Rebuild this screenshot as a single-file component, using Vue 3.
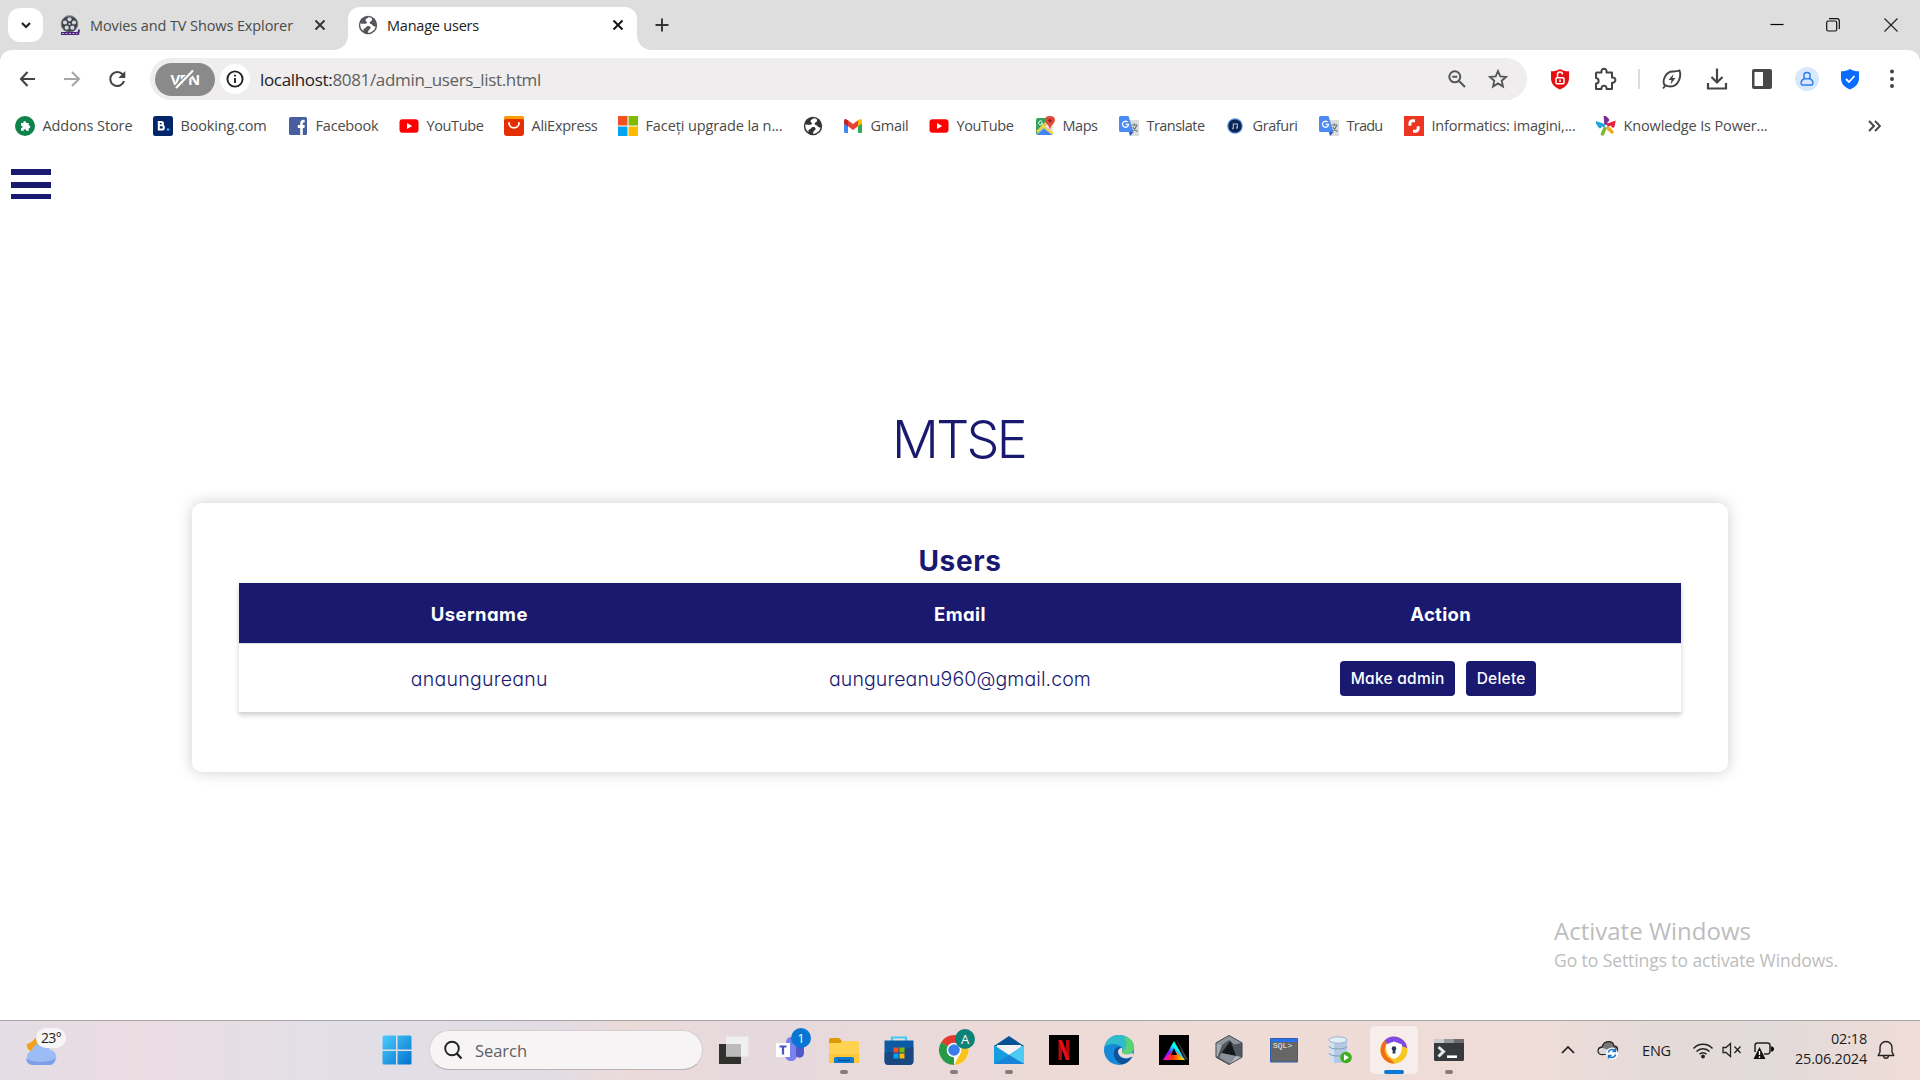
<script setup>
// Spreads or tightens the tracking so a label fills the given width in pixels.
const vFit = {
  mounted(el, { value }) {
    if (!value) return
    const range = document.createRange()
    range.selectNodeContents(el)
    const natural = range.getBoundingClientRect().width
    el.style.letterSpacing = (value - natural) / el.textContent.length + 'px'
  },
}

const globe = (c) => `<circle cx="10" cy="10" r="9.2" fill="${c}"/><path d="M10.5 2.2c-1 .9-2.8 1.500-3 3 0 1.300 1.600 1.100 1.500 2.400-.2 1.500-2.600 1.200-3.800 1.200L2.300 8.600c-.4 3 .7 5.600 3 7.400.2-1.500.3-2.400 1.600-2.700 1.400-.3 1.200-2 2.700-2.200 1.600-.2 3.200.4 3 2-.2 1.500-2.200 1.600-2.400 3.100v1.700c4-.4 6.600-3 7.400-6.400-1.500 0-2.500-.4-3.200-1.500-.8-1.200-2.600-.6-2.800-2.200-.1-1.500 1.800-1.500 2.300-2.600.4-.9 0-1.800-.3-2.300-.9-.5-1.900-.8-3.100-.7z" fill="#fff"/>`
const youtube = '<rect x="0.5" y="3.300" width="19" height="13.400" rx="3" fill="#f00"/><path d="M8 7v6l5.200-3z" fill="#fff"/>'
const translate = '<path d="M8 4h12v15a1 1 0 0 1-1 1H11z" fill="#dcdcdc"/><path d="M1.500 0h8L14.500 16H1.500A1.500 1.500 0 0 1 0 14.500v-13A1.500 1.500 0 0 1 1.500 0z" fill="#4b8bf5"/><path d="M10 16h4.500l-3.500 4z" fill="#2a53b8"/><path d="M8.600 6.100a3 3 0 1 0 .9 2.300H6.700" fill="none" stroke="#fff" stroke-width="1.300"/><path d="M12.500 9h6M15.300 7.500V9M17.600 9c-.5 3-2.500 5-4.100 6M14 11c.8 2 2.700 3.700 4.400 4.600" fill="none" stroke="#607078" stroke-width="1.100"/>'

const bookmarks = [
  { label: 'Addons Store', text: 90, width: 138, icon: '<circle cx="10" cy="10" r="10" fill="#0d824b"/><path d="M6 7h2.300c-.7-2.200 3.400-2.200 2.800 0h2.600v2.500c2.100-.6 2.100 3.100 0 2.600V14.700h-2.600c.5-1.900-2.800-1.900-2.400 0H6V12c1.900.4 1.900-2.600 0-2.300z" fill="#fff"/>' },
  { label: 'Booking.com', text: 86, width: 135, icon: '<rect width="20" height="20" rx="2.500" fill="#03266b"/><path d="M5.800 5v9.500M5.800 5.900h2.500c2.300 0 2.300 3.300 0 3.300H5.800h3c2.700 0 2.700 4.400 0 4.400h-3" fill="none" stroke="#fff" stroke-width="2"/><circle cx="15" cy="13.600" r="1.400" fill="#2aa8ff"/>' },
  { label: 'Facebook', text: 63, width: 111, icon: '<rect x="1" y="1" width="18" height="18" rx="1.500" fill="#475f9f"/><path d="M12.200 19v-7H9.800V9h2.400V7.200c0-2.400 1.400-3.700 4.500-3.300v2.500c-1.500-.1-1.900.2-1.900 1.200V9h2l-.4 3h-1.600v7z" fill="#fff"/>' },
  { label: 'YouTube', text: 57, width: 105, icon: youtube },
  { label: 'AliExpress', text: 66, width: 114, icon: '<rect width="20" height="20" rx="3" fill="#e62e04"/><path d="M0 4V3a3 3 0 0 1 3-3h14a3 3 0 0 1 3 3v1l-2-1H2z" fill="#ff9d00"/><path d="M5 7c0 6.500 10 6.500 10 0" fill="none" stroke="#fff" stroke-width="1.800" stroke-linecap="round"/>' },
  { label: 'Faceți upgrade la n...', text: 137, width: 185, icon: '<path fill="#f25022" d="M0 0h9.500v9.500H0z"/><path fill="#7fba00" d="M10.500 0H20v9.500h-9.500z"/><path fill="#00a4ef" d="M0 10.500h9.500V20H0z"/><path fill="#ffb900" d="M10.500 10.500H20V20h-9.500z"/>' },
  { label: '', text: 0, width: 40, icon: globe('#333') },
  { label: 'Gmail', text: 38, width: 86, icon: '<path d="M1 5v11a1 1 0 0 0 1 1h3V7z" fill="#4285f4"/><path d="M19 5v11a1 1 0 0 1-1 1h-3V7z" fill="#34a853"/><path d="M15 4.300 16.500 3.400C17.800 2.600 19 3.500 19 5v2.500l-4 3z" fill="#fbbc04"/><path d="M5 4.300 3.500 3.400C2.200 2.600 1 3.500 1 5v2.500l4 3z" fill="#c5221f"/><path d="M5 4.300v6l5 3.700 5-3.700v-6L10 8z" fill="#ea4335"/>' },
  { label: 'YouTube', text: 57, width: 106, icon: youtube },
  { label: 'Maps', text: 35, width: 84, icon: '<rect x="1" y="2" width="17" height="17" rx="2" fill="#34a35a"/><path d="m1 19 16-16 1 1v13l-6-5z" fill="#e8e8e8"/><path d="m2 19 8-8 7 8z" fill="#4285f4"/><path d="M2 16 13 5M8 10l10 8" stroke="#f9d24a" stroke-width="2.400"/><path d="M15 0c6 0 6 5 3 8-1.500 2-2.500 3-3 6-.5-3-1.500-4-3-6-3-3-3-8 3-8z" fill="#e1493b"/><circle cx="15" cy="4.600" r="1.700" fill="#84281f"/><path d="M7 5.500a2 2 0 1 0 .6 1.700H6" fill="none" stroke="#fff"/>' },
  { label: 'Translate', text: 58, width: 106, icon: translate },
  { label: 'Grafuri', text: 45, width: 94, icon: '<circle cx="10" cy="10" r="7.800" fill="#5b93dc"/><circle cx="10" cy="10" r="6.600" fill="#0d2350"/><path d="M8.300 12.500V8h4v4" fill="none" stroke="#b3c3dc" stroke-width="1.100"/><path d="M7.200 12.500h1.300m2.700-.5h1.300" stroke="#b3c3dc" stroke-width="1.600"/>' },
  { label: 'Tradu', text: 36, width: 85, icon: translate },
  { label: 'Informatics: imagini,...', text: 144, width: 192, icon: '<rect width="20" height="20" fill="#ee3524"/><path d="M11 4.800H8.500a2.600 2.600 0 0 0-2.600 2.600v2.400M9 15.200h2.600a2.600 2.600 0 0 0 2.600-2.600v-2.400" fill="none" stroke="#fff" stroke-width="3"/>' },
  { label: 'Knowledge Is Power...', text: 144, width: 180, icon: '<g stroke-width="3.400" stroke-linecap="round" fill="none"><path d="M10 8 9.500 2l2 2" stroke="#7b2d90"/><path d="m12 9 5.500-2-.5 3" stroke="#e4223c"/><path d="m12 12 4 4" stroke="#f5a81c"/><path d="M9 12 6.500 18" stroke="#7cb82f"/><path d="M8 9.500 2 7.500l2 3" stroke="#25a4dc"/></g><circle cx="10" cy="10" r="1.300" fill="#fff"/>' },
]

const apps = [
  { name: 'task-view', icon: '<path d="M4 13h22v20H4z" fill="#30302f"/><path d="M11 5.500h22.500v20H11z" fill="#f3f2f2" fill-opacity=".88"/><path d="M11 13h15v12.500H11z" fill="#bcbaba"/>' },
  { name: 'teams', icon: '<circle cx="21" cy="11" r="5" fill="#7b83eb"/><path d="M15 15h12v9c0 8-12 8-12 0z" fill="#7b83eb"/><path d="M26 14h8v8c0 5-6 6-8 3z" fill="#5059c9"/><path d="M6 12h14v14H6z" fill="#fff"/><path d="M9.500 15.500h7M13 15.500v8" stroke="#4b53bc" stroke-width="2.200"/>', badge: '1', tone: 'blue' },
  { name: 'explorer', running: true, icon: '<path d="M4 9a2 2 0 0 1 2-2h8l3 3-2 4H4z" fill="#dd9900"/><path d="M4 12h11l3-2h14a2 2 0 0 1 2 2v20H4z" fill="#ffd251"/><path d="M4 23h30v9H4z" fill="#ffc83b"/><path d="M9 32v-4a2 2 0 0 1 2-2h16a2 2 0 0 1 2 2v4z" fill="#0f7bd0"/><path d="M13 29.500h12" stroke="#0a539c" stroke-width="1.300"/>' },
  { name: 'store', icon: '<path d="M12 11V6.500h14V11" fill="none" stroke="#3dcdf9" stroke-width="2.200"/><path d="M4.500 9.500h29V30a4 4 0 0 1-4 4h-21a4 4 0 0 1-4-4z" fill="#0d5aa4"/><path d="M4.500 22 33.500 16v14a4 4 0 0 1-4 4h-21a4 4 0 0 1-4-4z" fill="#203d6c" opacity=".65"/><path fill="#f25022" d="M13.500 16.500h5v5h-5z"/><path fill="#7fba00" d="M19.500 16.500h5v5h-5z"/><path fill="#00a4ef" d="M13.500 22.500h5v5h-5z"/><path fill="#ffb900" d="M19.500 22.500h5v5h-5z"/>' },
  { name: 'chrome', running: true, icon: '<circle cx="19" cy="19" r="15" fill="#fff"/><path d="M19 19 6 11.500a15 15 0 0 1 26 0z" fill="#e33b2e"/><path d="M19 19 6 11.500A15 15 0 0 0 19 34z" fill="#269a48"/><path d="M12.500 22.500 6 11.500l13 7.500-2 12z" fill="#269a48"/><path d="M19 12h13a15 15 0 0 1-13 22l6.500-12z" fill="#fcc31e"/><circle cx="19" cy="19" r="7.300" fill="#fff"/><circle cx="19" cy="19" r="5.800" fill="#3b7ded"/>', badge: 'A', tone: 'green' },
  { name: 'mail', running: true, icon: '<path d="m4 15 15-10 15 10z" fill="#075197"/><path d="M7 14h24v12H7z" fill="#f4f3f5"/><path d="m4 14 15 10 15-10v19H4z" fill="#169de0"/><path d="m19 24 15-9.500V33z" fill="#4dcbf2"/><path d="m4 33 15-9 15 9z" fill="#1685d8"/>' },
  { name: 'netflix', icon: '<path d="M4 4h30v30H4z"/><path d="M13.500 9h3.500v20h-3.500zM21 9h3.500v20H21z" fill="#b00710"/><path d="M13.500 9H17l7.500 20H21z" fill="#ed0b16"/>' },
  { name: 'edge', icon: '<circle cx="19" cy="19" r="15" fill="#1689d8"/><path d="M4.500 16C6 8 12 4 19 4c9 0 15 6 15 12 0 5-4 7.500-8 7.500-3 0-4.500-1.500-4-3 .5-1 1-2 .5-3.500-3-5-13-5.500-18-1z" fill="#31bccb"/><path d="M24 5c6 2 10 6.500 10 11 0 5-4 7.500-8 7.500-3 0-4.500-1.500-4-3 5-3 6-9 2-15.500z" fill="#65d85b" opacity=".8"/><path d="M15 18c-3 5 0 13 7 15.500 4-1 8-3.500 10-7.500-8 4-14 0-14-5 0-2 1-4 3-4.500-2-1-5-.5-6 1.500z" fill="#0f5299"/><path d="M22 17c1 2-.5 3 0 4.500 1 2 5 2.500 10.500.5L34 26l-2-.5c-7 4-13 .5-14-4.500 0-2 1.500-4 4-4z" fill="#eedbd8"/>' },
  { name: 'spectrum', icon: '<defs><linearGradient id="sp1" x1="0" y1="1" x2="1" y2="0"><stop offset="0" stop-color="#f0f"/><stop offset=".35" stop-color="#62f"/><stop offset=".6" stop-color="#0ff"/><stop offset="1" stop-color="#0f6"/></linearGradient><linearGradient id="sp2"><stop offset="0" stop-color="#f0f"/><stop offset=".45" stop-color="#f30"/><stop offset="1" stop-color="#ff0"/></linearGradient></defs><path d="M4 4h30v30H4z"/><path d="M21 7 33 29l-3-1z" fill="#464646"/><path d="m19 10 11 19H8z" fill="url(#sp1)"/><path d="m19 19 11 10H8z" fill="url(#sp2)"/><path d="m19 17 3 7h-6z"/>' },
  { name: 'hexagon', icon: '<path d="m19 4.500 13 7.300v14.400l-13 7.300-13-7.300V11.800z" fill="#50565d" stroke="#3f454b"/><path d="m19 5 12.500 7-7 1.500L19 9l-7 5-5.500-2z" fill="#8d949b"/><path d="m6.500 12 5.500 2-4 11-1.500 1z" fill="#a4aab0"/><path d="m20.500 10 5.500 15-14.500-3z" fill="#14181d"/><path d="m11.500 22 14.500 3-7 7.500-10-6z" fill="#8a9199"/><path d="m26 25 5.500 1-12.500 7z" fill="#b3b8bd"/>' },
  { name: 'sqlplus', icon: '<path d="M5.500 7.500h27v23.500h-27z" fill="#666" stroke="#2c5fae"/><path d="M6 8h26v3H6z" fill="#2872ec"/>', caption: 'SQL>' },
  { name: 'database', icon: '<path d="M9 9v20c0 4 18 4 18 0V9z" fill="#b3cae2"/><path d="M9 9v20c0 1.500 2 2.500 5 2.800V9z" fill="#d3e2f0"/><path d="M9 15c0 4 18 4 18 0M9 22c0 4 18 4 18 0" fill="none" stroke="#7f9dbe"/><ellipse cx="18" cy="9" rx="9" ry="3.200" fill="#e3edf6" stroke="#8aa6c4" stroke-width=".8"/><circle cx="26" cy="26.500" r="5.800" fill="#3fae1c"/><path d="M24 23.300v6.400l5-3.200z" fill="#fff"/>' },
  { name: 'secure-browser', active: true, icon: '<circle cx="19" cy="19" r="10.500" fill="none" stroke="#f7c822" stroke-width="6"/><path d="M20 32.500A13.500 13.500 0 0 1 9.500 9.500L12 12.500A10 10 0 0 0 14 27z" fill="#f36b17"/><path d="M9.500 9.500A13.500 13.500 0 0 1 32.300 17L26 15c-4-4-8-5-13-1.500z" fill="#7c4be8"/><path d="m19 10.500 8 3c0 7-2 12-8 14.500-6-2.500-8-7.500-8-14.500z" fill="#fff"/><circle cx="19" cy="17.500" r="2.300" fill="#27355b"/><path d="M18 18h2l.5 4.500h-3z" fill="#27355b"/>' },
  { name: 'terminal', running: true, icon: '<rect x="4" y="8" width="30" height="22" rx="1.500" fill="#373a3c"/><path d="M5 8h9v4H4V9a1 1 0 0 1 1-1z" fill="#ccc"/><path d="M14 8h10v4H14z" fill="#969696"/><path d="M24 8h9a1 1 0 0 1 1 1v3H24z" fill="#6b6b6b"/><path d="m8.500 16 5 4.500-5 5" fill="none" stroke="#e8e8e8" stroke-width="3"/><path d="M17 25.700h10" stroke="#fff" stroke-width="2.600"/>' },
]
</script>

<template>
  <div class="screen">
    <header class="tabs">
      <div class="tab-search"><svg width="12" height="12" viewBox="0 0 12 12"><path d="m2 4 4 4 4-4" fill="none" stroke="#222" stroke-width="2.200" /></svg></div>
      <div class="tab idle">
        <svg class="favicon" width="20" height="20" viewBox="0 0 20 20"><circle cx="9.500" cy="9" r="8" fill="#40434c" /><g fill="#d4d7de"><circle cx="9.500" cy="4.300" r="2.100" /><circle cx="14" cy="7.500" r="2.100" /><circle cx="12.300" cy="12.700" r="2.100" /><circle cx="6.700" cy="12.700" r="2.100" /><circle cx="5" cy="7.500" r="2.100" /><circle cx="9.500" cy="9" r="1" /></g><circle cx="9.500" cy="9" r="8.300" fill="none" stroke="#747985" /><path d="M1 17h16.500l1-3 1.500 1-1 5H1z" fill="#4b2577" /><path d="M2 18.500h15.500" stroke="#bda4dc" stroke-dasharray="2 1.500" /></svg>
        <span v-fit="203" class="tab-title">Movies and TV Shows Explorer</span>
        <svg class="x" width="12" height="12" viewBox="0 0 12 12"><path d="m1.500 1.500 9 9m0-9-9 9" stroke="#333" stroke-width="1.900" /></svg>
      </div>
      <div class="tab current">
        <svg class="favicon" width="20" height="20" viewBox="0 0 20 20" v-html="globe('#54575b')" />
        <span v-fit="92" class="tab-title">Manage users</span>
        <svg class="x" width="12" height="12" viewBox="0 0 12 12"><path d="m1.500 1.500 9 9m0-9-9 9" stroke="#111" stroke-width="1.900" /></svg>
      </div>
      <svg class="plus" width="14" height="14" viewBox="0 0 14 14"><path d="M7 .5v13M.5 7h13" stroke="#333" stroke-width="1.900" /></svg>
      <div class="window-controls">
        <svg width="14" height="14" viewBox="0 0 14 14"><path d="M.5 6.500h13" stroke="#000" stroke-width="1.200" /></svg>
        <svg width="14" height="14" viewBox="0 0 14 14"><rect x=".7" y="3" width="10" height="10" rx="1.500" fill="none" stroke="#111" stroke-width="1.200" /><path d="M3 .7h8a2.300 2.300 0 0 1 2.300 2.300v8" fill="none" stroke="#111" stroke-width="1.200" /></svg>
        <svg width="14" height="14" viewBox="0 0 14 14"><path d="m.5.5 13 13m0-13-13 13" stroke="#222" stroke-width="1.200" /></svg>
      </div>
    </header>

    <section class="chrome">
      <div class="toolbar">
        <nav class="nav">
          <svg width="18" height="18" viewBox="0 0 18 18"><path d="M17 9H3.500M9.500 2 3 9l6.500 7" fill="none" stroke="#444" stroke-width="2.100" /></svg>
          <svg width="18" height="18" viewBox="0 0 18 18"><path d="M1 9h14.500M9 2l7 7-7 7" fill="none" stroke="#a7a7a7" stroke-width="2.100" /></svg>
          <svg width="18" height="18" viewBox="0 0 18 18"><path d="M16 11A7 7 0 1 1 14.800 4.700L16.300 6.500" fill="none" stroke="#444" stroke-width="2.100" /><path d="M17.300 1v7h-7z" fill="#444" /></svg>
        </nav>
        <div class="omnibox">
          <div class="vpn"><span v-fit="29">VPN</span><svg width="20" height="20" viewBox="0 0 20 20"><path d="M1 18.500 18 3" stroke="#8a8a8a" stroke-width="5" /><path d="M1 19 18 1.500" stroke="#fff" stroke-width="2.200" /></svg></div>
          <div class="info"><svg width="18" height="18" viewBox="0 0 18 18"><circle cx="9" cy="9" r="7.600" fill="none" stroke="#222" stroke-width="1.900" /><path d="M9 8v5M9 4.700v1.900" stroke="#222" stroke-width="1.900" /></svg></div>
          <div v-fit="281" class="url"><b>localhost:</b>8081/admin_users_list.html</div>
          <svg class="magnifier" width="18" height="18" viewBox="0 0 18 18"><circle cx="6.800" cy="6.800" r="5.500" fill="none" stroke="#555" stroke-width="2" /><path d="m11 11 6 6M4.300 6.800h5" stroke="#555" stroke-width="2" /></svg>
          <svg class="star" width="20" height="20" viewBox="0 0 20 20"><path d="m10 2 2.300 5.400 5.800.5-4.400 3.800 1.300 5.800-5-3.100-5 3.100 1.300-5.800L1.900 7.900l5.800-.5z" fill="none" stroke="#555" stroke-width="1.800" /></svg>
        </div>
        <div class="extensions">
          <svg width="24" height="24" viewBox="0 0 24 24"><path d="M12 2c2.500 1.700 5.500 2.300 9 2.300V11c0 5.500-3.300 9-9 11.500C6.300 20 3 16.500 3 11V4.300C6.500 4.300 9.500 3.700 12 2z" fill="#e60d10" /><rect x="8" y="10.800" width="8" height="6" rx="1" fill="none" stroke="#fff" stroke-width="1.500" /><path d="M9.500 10.500v-3a2.500 2.500 0 0 1 5 0M12 12.500v2.500" fill="none" stroke="#fff" stroke-width="1.500" /></svg>
          <svg width="24" height="24" viewBox="0 0 24 24"><path d="M4 5.500h4.500c-1-5 6-5 5 0H19v5c4.500-.8 4.500 6 0 5.200V22h-5.500c.5-4.500-5.500-4.500-5 0H3v-5.500c3.500 0 3.500-5 0-5.500V6.500a1 1 0 0 1 1-1z" fill="none" stroke="#444" stroke-width="2" stroke-linejoin="round" /></svg>
          <i class="divider" />
          <svg width="24" height="24" viewBox="0 0 24 24"><path d="M3 21.500 5 19c-3.500-5 .500-14.500 8-14.500 3 0 5-.8 6.500-1 2 5-.5 16-9 16-2.500 0-4-.5-5.500-1.500" fill="none" stroke="#444" stroke-width="1.900" /><path d="m13.500 7-5 6h3l-1 4.500 5-6.500h-3z" fill="#444" /></svg>
          <svg width="24" height="24" viewBox="0 0 24 24"><path d="M12 1.500V15M6.500 10l5.500 5.500 5.500-5.500M3 16v5.500h18V16" fill="none" stroke="#444" stroke-width="2.200" /></svg>
          <svg width="24" height="24" viewBox="0 0 24 24"><rect x="2" y="2" width="20" height="20" rx="2" fill="#484848" /><path d="M4.500 5H13v14H4.500z" fill="#fff" /></svg>
          <svg width="24" height="24" viewBox="0 0 24 24"><circle cx="12" cy="12" r="12" fill="#d9e8fd" /><circle cx="12" cy="8.700" r="3.200" fill="none" stroke="#2680f0" stroke-width="1.400" /><path d="M9.800 11.500C5 13 5.500 18 7.500 18h9c2 0 2.500-5-2.300-6.500" fill="none" stroke="#2680f0" stroke-width="1.400" /></svg>
          <svg class="safe" width="24" height="24" viewBox="0 0 24 24"><path d="M12 2c2.500 1.700 5.500 2.300 9 2.300V11c0 5.500-3.300 9-9 11.500C6.300 20 3 16.500 3 11V4.300C6.500 4.300 9.500 3.700 12 2z" fill="#0a6cff" /><path d="m8 12 3 3 5.500-6" fill="none" stroke="#fff" stroke-width="1.800" /></svg>
          <svg class="dots" width="24" height="24" viewBox="0 0 24 24"><g fill="#444"><circle cx="12" cy="4.500" r="2" /><circle cx="12" cy="12" r="2" /><circle cx="12" cy="19" r="2" /></g></svg>
        </div>
      </div>
      <div class="bookmarks">
        <div v-for="(b, i) in bookmarks" :key="i" class="bookmark" :style="{ width: b.width + 'px' }">
          <svg width="20" height="20" viewBox="0 0 20 20" v-html="b.icon" />
          <span v-if="b.label" v-fit="b.text">{{ b.label }}</span>
        </div>
        <svg class="more" width="13" height="12" viewBox="0 0 13 12"><path d="m1 1 5 5-5 5m6-10 5 5-5 5" fill="none" stroke="#444" stroke-width="1.900" /></svg>
      </div>
    </section>

    <main class="page">
      <div class="burger"><i /><i /><i /></div>
      <h1><span v-fit="133">MTSE</span></h1>
      <section class="card">
        <h2><span v-fit="83">Users</span></h2>
        <table>
          <thead>
            <tr><th><span v-fit="97">Username</span></th><th><span v-fit="52">Email</span></th><th><span v-fit="61">Action</span></th></tr>
          </thead>
          <tbody>
            <tr>
              <td><span v-fit="137">anaungureanu</span></td>
              <td><span v-fit="262">aungureanu960@gmail.com</span></td>
              <td class="last"><div class="actions"><button class="admin"><span v-fit="94">Make admin</span></button><button class="delete"><span v-fit="49">Delete</span></button></div></td>
            </tr>
          </tbody>
        </table>
      </section>
      <aside class="watermark">
        <div class="wm-title"><span v-fit="197">Activate Windows</span></div>
        <div class="wm-sub"><span v-fit="284">Go to Settings to activate Windows.</span></div>
      </aside>
    </main>

    <footer class="taskbar">
      <div class="weather">
        <svg width="32" height="32" viewBox="0 0 32 32"><path d="M2 8c4-1 7-4 9-7l4 8-7 7C4 15 1 12 2 8z" fill="#f5a11c" /><path d="M8 29a7.500 7.500 0 0 1-1-14.500C10 4 23 5 25 14c9 1 8 15-1 15z" fill="#9cbcf5" /><path d="M1 22c3 5 26 5 29 0 0 4-2 7-6 7H8c-4 0-7-3-7-7z" fill="#7c9fe8" /></svg>
        <div class="temp"><span v-fit="20">23°</span></div>
      </div>
      <svg class="start" width="30" height="30" viewBox="0 0 30 30"><defs><linearGradient id="win" x1="0" y1="0" x2="1" y2="1"><stop offset="0" stop-color="#4ccdfb" /><stop offset="1" stop-color="#0072d0" /></linearGradient></defs><path d="M2 .5h12v14H.5V2A1.500 1.500 0 0 1 2 .5zM15.500.5H28A1.500 1.500 0 0 1 29.500 2v12.500h-14zM.5 16H14v13.500H2A1.500 1.500 0 0 1 .5 28zM15.500 16h14v12a1.500 1.500 0 0 1-1.500 1.500H15.500z" fill="url(#win)" /></svg>
      <div class="search">
        <svg width="20" height="20" viewBox="0 0 20 20"><circle cx="9" cy="8.500" r="6.800" fill="none" stroke="#222" stroke-width="1.900" /><path d="m13.800 13.500 4.700 5" stroke="#222" stroke-width="2.400" /></svg>
        <span v-fit="52">Search</span>
      </div>
      <div class="apps">
        <div v-for="a in apps" :key="a.name" class="app" :class="{ running: a.running, active: a.active }">
          <svg width="38" height="38" viewBox="0 0 38 38" v-html="a.icon" />
          <span v-if="a.caption" class="caption">{{ a.caption }}</span>
          <span v-if="a.badge" class="badge" :class="a.tone">{{ a.badge }}</span>
        </div>
      </div>
      <div class="tray">
        <svg class="t-up" width="14" height="10" viewBox="0 0 14 10"><path d="m1 8 6-6 6 6" fill="none" stroke="#222" stroke-width="1.700" /></svg>
        <svg class="t-cloud" width="22" height="20" viewBox="0 0 22 20"><path d="M5 14.500C-.5 14.500 0 7.500 5 7 7 0 16 0 17 6c4 0 4 4 3 6.500z" fill="#777" stroke="#222" stroke-width="1.300" /><path d="M4 14c-4-2-2-6 1-6s5 3 9 1l2 5z" fill="#d9d9d9" /><circle cx="15" cy="13.500" r="6" fill="#fff" /><path d="M11.300 12.500a4 4 0 0 1 7-1.500m.2-2.500v3h-3M18.700 14.500a4 4 0 0 1-7 1.500m-.2 2.500v-3h3" fill="none" stroke="#1374cc" stroke-width="1.500" /></svg>
        <span v-fit="29" class="lang">ENG</span>
        <svg class="t-wifi" width="22" height="18" viewBox="0 0 22 18"><g fill="none" stroke="#222" stroke-width="1.500"><path d="M1.500 7.500a13 13 0 0 1 19 0M4.500 10.500a9 9 0 0 1 13 0M7.500 13.300a5 5 0 0 1 7 0" /></g><circle cx="11" cy="15.500" r="1.900" fill="#222" /></svg>
        <svg class="t-sound" width="20" height="16" viewBox="0 0 20 16"><path d="M1 5.500h3L8.500 1.500v13L4 10.500H1zM12.500 4.500l6 6.500m0-6.500-6 6.500" fill="none" stroke="#222" stroke-width="1.300" /></svg>
        <svg class="t-battery" width="22" height="18" viewBox="0 0 22 18"><path d="M2 11V4.500A2.500 2.500 0 0 1 4.500 2h10A2.500 2.500 0 0 1 17 4.500v6a2.500 2.500 0 0 1-2.500 2.500H11" fill="none" stroke="#222" stroke-width="1.500" /><path d="M18 5.500h1.500L21 7v2l-1.500 1.500H18zM6.500 6 12.500 18H.5z" fill="#111" /><path d="M6.500 10v4m0 1.300V17" stroke="#fff" stroke-width="1.300" /></svg>
        <div class="clock"><div><span v-fit="36">02:18</span></div><div><span v-fit="72">25.06.2024</span></div></div>
        <svg class="t-bell" width="18" height="20" viewBox="0 0 18 20"><path d="M1.200 15.500 3 12V7.500a6 6 0 0 1 12 0V12l1.800 3.500zM6.500 16c.5 3 4.500 3 5 0" fill="none" stroke="#222" stroke-width="1.400" stroke-linejoin="round" /></svg>
      </div>
    </footer>
  </div>
</template>

<style>
body { margin: 0; overflow: hidden; }
</style>

<style scoped>
* { box-sizing: border-box; }
svg { display: block; flex: none; }
span { white-space: nowrap; }
.screen { width: 1920px; height: 1080px; display: flex; flex-direction: column; background: #dedede; font-family: "Open Sans", "Noto Sans", sans-serif; font-size: 14.500px; color: #4a4a4a; overflow: hidden; }

.tabs { height: 50px; flex: none; display: flex; align-items: center; }
.tab-search { width: 35px; height: 34px; margin-left: 8px; border-radius: 12px; background: #fff; display: flex; align-items: center; justify-content: center; }
.tab { display: flex; align-items: center; height: 43px; margin-top: 7px; padding-bottom: 7px; }
.idle { width: 290px; margin-left: 15px; padding-left: 2px; }
.current { position: relative; width: 289px; background: #fff; border-radius: 12px 12px 0 0; padding-left: 10px; color: #222; }
.current::before, .current::after { content: ""; position: absolute; bottom: 0; width: 14px; height: 14px; }
.current::before { left: -14px; background: radial-gradient(circle at 0 0, transparent 13.500px, #fff 14px); }
.current::after { right: -14px; background: radial-gradient(circle at 100% 0, transparent 13.500px, #fff 14px); }
.tab-title { width: 212px; margin-left: 10px; }
.idle .x { margin-left: 12px; }
.current .tab-title { width: 214px; margin-left: 9px; }
.current .x { margin-left: 11px; }
.plus { margin-left: 18px; }
.window-controls { margin-left: auto; margin-right: 22px; display: flex; }
.window-controls svg:nth-child(2) { margin: 0 44px 0 42px; }

.chrome { height: 100px; flex: none; background: linear-gradient(#fff, #fff) 0 20px no-repeat, #fff; border-radius: 12px 12px 0 0; }
.toolbar { display: flex; align-items: center; height: 58px; }
.nav { display: flex; gap: 27px; width: 132px; margin-left: 18px; }
.omnibox { width: 1377px; height: 42px; border-radius: 21px; background: #efedee; display: flex; align-items: center; padding-left: 5px; }
.vpn { position: relative; width: 60px; height: 33px; border-radius: 17px; background: #8a8a8a; color: #fff; font-weight: 700; font-size: 15px; display: flex; align-items: center; justify-content: center; }
.vpn svg { position: absolute; left: 20px; top: 6px; }
.info { width: 30px; height: 30px; margin-left: 5px; border-radius: 50%; background: #fff; display: flex; align-items: center; justify-content: center; }
.url { width: 1186px; margin-left: 10px; font-size: 17px; white-space: nowrap; color: #606060; }
.url b { font-weight: 400; color: #222; }
.magnifier { margin-left: 2px; }
.star { margin-left: 22px; }
.extensions { display: flex; align-items: center; gap: 21px; margin-left: 21px; }
.extensions .safe { margin-left: -2px; }
.extensions .dots { margin-left: -3px; }
.divider { width: 2px; height: 20px; background: #ddd; margin: 0 -1px 0 0; }
.bookmarks { height: 36px; display: flex; align-items: center; padding-left: 15px; }
.bookmark { display: flex; align-items: center; gap: 7.500px; flex: none; }
.bookmark span { padding-bottom: 2px; }
.more { margin-left: 92px; }

.page { flex: 1; position: relative; background: #fff; color: #191970; font-family: Inter, sans-serif; font-feature-settings: "cv11"; display: flex; flex-direction: column; align-items: center; }
.burger { align-self: flex-start; width: 40px; height: 30px; margin: 19px 0 0 11px; display: flex; flex-direction: column; justify-content: space-between; }
.burger i { height: 6px; background: #191970; }
.burger i:last-child { height: 5px; }
h1 { margin: 209px 0 0; height: 64px; line-height: 64px; font-size: 52px; font-weight: 350; padding-right: 3px; }
.card { width: 1536px; height: 269px; margin-top: 31px; padding: 40px 47px 0; border-radius: 10px; box-shadow: 0 0 15px rgba(0, 0, 0, .2); background: #fff; }
h2 { margin: 0; height: 40px; line-height: 36px; text-align: center; font-size: 28px; font-weight: 650; }
table { width: 1442px; border-collapse: separate; border-spacing: 0; table-layout: fixed; box-shadow: 0 2px 5px rgba(0, 0, 0, .2); }
th { height: 60px; padding: 2px 0 0; background: #191970; color: #fff; font-size: 18.500px; font-weight: 750; }
td { height: 70px; padding: 2px 0 0; border-top: 1px solid #ddd; border-bottom: 1px solid #d5d5d5; text-align: center; font-size: 19.500px; font-weight: 330; }
td.last { padding: 0; }
.actions { display: flex; justify-content: center; gap: 11px; padding-right: 5px; }
button { height: 35px; border: 0; padding: 0; border-radius: 4px; background: #191970; color: #fff; font: 500 15.500px Inter, sans-serif; font-feature-settings: "cv11"; }
.admin { width: 115px; }
.delete { width: 70px; }
.watermark { position: absolute; left: 1554px; top: 764px; color: #bdbdbd; font-family: "Open Sans", sans-serif; }
.wm-title { height: 34px; line-height: 34px; font-size: 24px; font-weight: 400; }
.wm-sub { height: 26px; line-height: 24px; font-size: 17.500px; }

.taskbar { height: 60px; flex: none; border-top: 1px solid #aaa6a8; display: flex; align-items: center; background: linear-gradient(90deg, #e4dde5, #ebdce2 7%, #e3dfe6 16%, #e2dde4 29%, #ecdad9 33%, #e5d9de 39%, #ecdad8 52%, #efdbd5 64%, #efdcd8 80%, #e4dbd9 86%, #e3dbd9 93%, #f0dcd8); color: #1c1c1c; padding-bottom: 1px; }
.weather { position: relative; margin-left: 25px; width: 357px; padding-top: 3px; }
.temp { position: absolute; left: 11px; top: -5px; width: 30px; height: 20px; border-radius: 10px; background: #f8f5f7; text-align: center; line-height: 20px; font-size: 14px; }
.search { display: flex; align-items: center; gap: 12px; width: 274px; height: 40px; margin-left: 17px; padding-left: 13px; border-radius: 20px; background: #f7f4f5; border: 1px solid #d8ced1; border-bottom-color: #b9b1b4; font-size: 16.500px; color: #606060; }
.apps { display: flex; gap: 7px; margin-left: 7px; }
.app { position: relative; width: 48px; height: 48px; border-radius: 5px; display: flex; justify-content: center; padding-top: 5px; }
.active { background: #f7eeeb; box-shadow: 0 0 0 1px #e7dcd9; }
.running::after, .active::after { content: ""; position: absolute; left: 20px; bottom: 0; width: 8px; height: 4px; border-radius: 2px; background: #877c7b; }
.active::after { left: 14px; width: 20px; background: #0878d4; }
.badge { position: absolute; left: 25px; top: 3px; width: 20px; height: 20px; border-radius: 50%; color: #fff; text-align: center; line-height: 20px; font-size: 13px; }
.blue { background: #0874d4; top: 2px; left: 26px; }
.green { background: #0b8378; }
.caption { position: absolute; left: 13px; top: 15px; color: #eee; font: 8px/10px "Liberation Mono", monospace; }
.tray { display: flex; align-items: center; margin-left: auto; }
.t-cloud { margin-left: 22px; }
.lang { margin-left: 23px; width: 29px; font-size: 14.500px; }
.t-wifi { margin-left: 21px; }
.t-sound { margin-left: 8px; }
.t-battery { margin-left: 11px; }
.clock { width: 92px; text-align: right; line-height: 20px; font-size: 14.500px; padding-bottom: 2px; }
.t-bell { margin: 0 25px 0 10px; }
</style>
